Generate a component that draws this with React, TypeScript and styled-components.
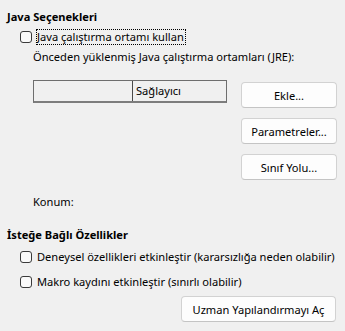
import React from "react";
import styled, { createGlobalStyle } from "styled-components";

const GlobalStyle = createGlobalStyle`
  html, body {
    margin: 0;
    padding: 0;
    background: #f0f0f0;
  }
  body {
    font-family: "Noto Sans", "Open Sans", sans-serif;
    font-size: 11.1px;
    color: #000000;
  }
`;

const Page = styled.div`
  width: 345px;
  height: 331px;
  box-sizing: border-box;
  padding: 9px 9px 0 7px;
  display: flex;
  flex-direction: column;
`;

const Heading = styled.div<{ top?: number }>`
  font-weight: 700;
  line-height: 16px;
  height: 16px;
  margin-top: ${(p) => p.top ?? 0}px;
`;

const Indent = styled.div`
  padding-left: 13px;
  display: flex;
  flex-direction: column;
`;

const CheckRow = styled.label<{ top?: number }>`
  display: flex;
  align-items: center;
  gap: 5px;
  height: 14px;
  margin-top: ${(p) => p.top ?? 0}px;
  white-space: nowrap;
`;

const Box = styled.span`
  width: 12px;
  height: 12px;
  box-sizing: border-box;
  border: 1px solid #3a3a3a;
  border-radius: 3px;
  background: #fafafa;
  flex: none;
`;

const Caption = styled.span<{ focused?: boolean }>`
  line-height: 14px;
  padding: 0 1px 0 0;
  margin-left: ${(p) => (p.focused ? -1 : 0)}px;
  border: ${(p) => (p.focused ? "1px dotted #000" : "none")};
`;

const Inner = styled.div`
  padding-left: 13px;
  display: flex;
  flex-direction: column;
`;

const Text = styled.div<{ top?: number }>`
  line-height: 16px;
  height: 16px;
  margin-top: ${(p) => p.top ?? 0}px;
  white-space: nowrap;
`;

const JreArea = styled.div`
  display: flex;
  align-items: flex-start;
  margin-top: 15px;
`;

const Table = styled.div`
  width: 194px;
  flex: none;
`;

const HeaderRow = styled.div`
  display: grid;
  grid-template-columns: 98px 1fr;
  height: 23px;
  box-sizing: border-box;
  border: 1px solid #6e6e6e;
  border-bottom: 2px solid #7d7d7d;
`;

const HeaderCell = styled.div`
  line-height: 20px;
  padding-left: 3px;
  & + & {
    border-left: 1px solid #4a4a4a;
  }
`;

const ButtonColumn = styled.div`
  display: flex;
  flex-direction: column;
  gap: 10px;
  margin-left: 14px;
  margin-top: 2px;
`;

const Button = styled.button<{ width?: number }>`
  width: ${(p) => p.width ?? 96}px;
  height: 26px;
  box-sizing: border-box;
  border: 1px solid #d2d2d2;
  border-bottom-color: #c4c4c4;
  border-radius: 4px;
  background: #fdfdfd;
  font-family: inherit;
  font-size: inherit;
  color: #000;
  padding: 0;
`;

const Footer = styled.div`
  display: flex;
  justify-content: flex-end;
  margin-top: 7px;
`;

export default function App() {
  return (
    <>
      <GlobalStyle />
      <Page>
        <Heading>Java Seçenekleri</Heading>
        <Indent>
          <CheckRow top={5}>
            <Box />
            <Caption focused>Java çalıştırma ortamı kullan</Caption>
          </CheckRow>
          <Inner>
            <Text top={5}>Önceden yüklenmiş Java çalıştırma ortamları (JRE):</Text>
            <JreArea>
              <Table>
                <HeaderRow>
                  <HeaderCell />
                  <HeaderCell>Sağlayıcı</HeaderCell>
                </HeaderRow>
              </Table>
              <ButtonColumn>
                <Button>Ekle...</Button>
                <Button>Parametreler...</Button>
                <Button>Sınıf Yolu...</Button>
              </ButtonColumn>
            </JreArea>
            <Text top={14}>Konum:</Text>
          </Inner>
        </Indent>
        <Heading top={17}>İsteğe Bağlı Özellikler</Heading>
        <Indent>
          <CheckRow top={7}>
            <Box />
            <Caption>Deneysel özellikleri etkinleştir (kararsızlığa neden olabilir)</Caption>
          </CheckRow>
          <CheckRow top={11}>
            <Box />
            <Caption>Makro kaydını etkinleştir (sınırlı olabilir)</Caption>
          </CheckRow>
        </Indent>
        <Footer>
          <Button width={155}>Uzman Yapılandırmayı Aç</Button>
        </Footer>
      </Page>
    </>
  );
}
